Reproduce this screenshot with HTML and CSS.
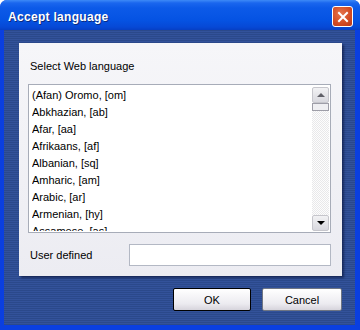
FILE: index.html
```html
<!DOCTYPE html>
<html lang="en">
<head>
    <meta charset="UTF-8">
    <title>Accept language</title>
    <link rel="stylesheet" href="styles.css">
</head>
<body>
    <div class="window">
        <div class="titlebar">
            <span class="title">Accept language</span>
            <button class="close" type="button" aria-label="Close">
                <svg width="12" height="12" viewBox="0 0 12 12">
                    <path d="M2 2 L10 10 M10 2 L2 10" stroke="#fff" stroke-width="2" stroke-linecap="square"/>
                </svg>
            </button>
        </div>

        <div class="client">
            <!-- Language panel -->
            <div class="panel">
                <div class="label">Select Web language</div>
                <div class="listbox">
                    <ul class="items">
                        <li>(Afan) Oromo, [om]</li>
                        <li>Abkhazian, [ab]</li>
                        <li>Afar, [aa]</li>
                        <li>Afrikaans, [af]</li>
                        <li>Albanian, [sq]</li>
                        <li>Amharic, [am]</li>
                        <li>Arabic, [ar]</li>
                        <li>Armenian, [hy]</li>
                        <li>Assamese, [as]</li>
                    </ul>
                    <div class="scrollbar">
                        <div class="sb-btn"><span class="arrow up"></span></div>
                        <div class="sb-thumb"></div>
                        <div class="sb-track"></div>
                        <div class="sb-btn"><span class="arrow down"></span></div>
                    </div>
                </div>
                <div class="user-row">
                    <span class="user-label">User defined</span>
                    <input type="text" class="user-input">
                </div>
            </div>

            <!-- Dialog buttons -->
            <div class="buttons">
                <button type="button" class="btn btn-default">OK</button>
                <button type="button" class="btn">Cancel</button>
            </div>
        </div>
    </div>
</body>
</html>
```

FILE: styles.css
```css
html, body {
    margin: 0;
    padding: 0;
    width: 360px;
    height: 330px;
    overflow: hidden;
    background: #fff;
}
.window {
    width: 360px;
    height: 330px;
    display: flex;
    flex-direction: column;
    background: #0a3fe0;
    border-radius: 7px 7px 0 0;
    font-family: "Liberation Sans", Arial, sans-serif;
    font-size: 11px;
    color: #000;
}
.titlebar {
    height: 30px;
    flex: none;
    display: flex;
    align-items: center;
    justify-content: space-between;
    padding: 0 7px 0 8px;
    border-radius: 7px 7px 0 0;
    background: linear-gradient(#3d8af7 0px, #1a66ee 3px, #0c5ae8 8px, #0553e3 20px, #0649d6 27px, #063fc4 30px);
}
.title {
    color: #fff;
    font-weight: bold;
    font-size: 12px;
    letter-spacing: 0.3px;
    text-shadow: 1px 1px 0 #0a2a80;
    margin-top: 4px;
}
.close {
    width: 21px;
    height: 21px;
    padding: 0;
    margin-top: 3px;
    display: flex;
    align-items: center;
    justify-content: center;
    border: 1px solid #fff;
    border-radius: 3px;
    background: radial-gradient(circle at 40% 35%, #e5744c, #d24a22 60%, #b8391a);
}
.client {
    flex: 1;
    margin: 0 5px 5px 4px;
    display: flex;
    flex-direction: column;
    padding: 13px 13px 0 15px;
    background: repeating-linear-gradient(#2b498b 0 1px, #33529a 1px 2px);
}
.panel {
    height: 233px;
    box-sizing: border-box;
    padding: 17px 11px 0 9px;
    background: linear-gradient(#f6f6f9, #ececf2);
    box-shadow: 2px 2px 2px rgba(10, 20, 60, 0.6);
}
.label {
    height: 24px;
    padding-left: 2px;
    line-height: 13px;
}
.listbox {
    height: 149px;
    box-sizing: border-box;
    border: 1px solid #a7acb8;
    background: #fff;
    display: flex;
    padding: 2px 1px 1px 3px;
}
.items {
    flex: 1;
    list-style: none;
    margin: 0;
    padding: 0;
    overflow: hidden;
}
.items li {
    height: 17px;
    line-height: 17px;
    white-space: nowrap;
}
.scrollbar {
    width: 17px;
    display: flex;
    flex-direction: column;
}
.sb-btn {
    height: 16px;
    flex: none;
    box-sizing: border-box;
    border: 1px solid #c6c6cc;
    border-radius: 2px;
    background: linear-gradient(#f2f2f4, #d8d8de);
    display: flex;
    align-items: center;
    justify-content: center;
}
.sb-thumb {
    height: 8px;
    flex: none;
    box-sizing: border-box;
    border: 1px solid #9e9ea8;
    background: #efeff2;
}
.sb-track {
    flex: 1;
    background-color: #f8f8f8;
    background-image: repeating-conic-gradient(#e8e8ea 0 25%, #fdfdfd 0 50%);
    background-size: 2px 2px;
}
.arrow {
    width: 0;
    height: 0;
    border-left: 4px solid transparent;
    border-right: 4px solid transparent;
}
.arrow.up {
    border-bottom: 4px solid #606068;
}
.arrow.down {
    border-top: 4px solid #000;
}
.user-row {
    margin-top: 11px;
    display: flex;
    align-items: center;
    justify-content: space-between;
}
.user-label {
    padding-left: 2px;
}
.user-input {
    width: 202px;
    height: 22px;
    box-sizing: border-box;
    margin: 0;
    border: 1px solid #b3b8c4;
    background: #fff;
}
.buttons {
    margin-top: 12px;
    display: flex;
    justify-content: flex-end;
    gap: 11px;
}
.btn {
    height: 23px;
    width: 80px;
    padding: 0;
    font-family: "Liberation Sans", Arial, sans-serif;
    font-size: 11px;
    color: #000;
    border: 1px solid #6f7582;
    border-radius: 2px;
    background: linear-gradient(#ffffff, #ecebf0 70%, #d6d4dc);
}
.btn-default {
    width: 78px;
    border-color: #000;
}
```
